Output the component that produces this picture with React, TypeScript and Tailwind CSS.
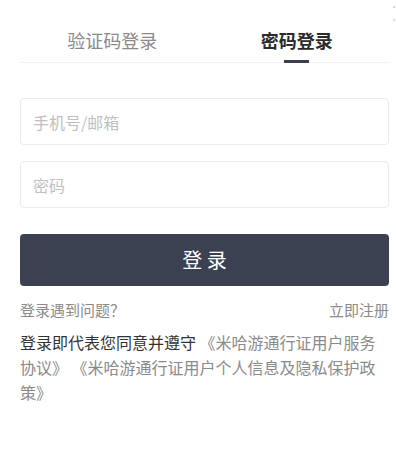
export default function App() {
  return (
    <div
      className="relative w-[396px] h-[452px] bg-white"
      style={{ fontFamily: '"Microsoft YaHei", "Noto Sans CJK SC", "Noto Sans", sans-serif' }}
    >
      <div className="absolute right-[1px] top-[6px] w-[2px] h-[2px] bg-[#d8d8d8]" />
      <div className="absolute right-[1px] top-[19px] w-[2px] h-[2px] bg-[#d8d8d8]" />
      <div className="pl-5 pr-[7px]">
        <div className="flex border-b border-[#f0f0f0] pt-[28px]">
          <div className="flex-1 flex flex-col items-center">
            <span className="text-[18px] leading-6 text-[#8a8a8a]">验证码登录</span>
            <span className="mt-[8px] h-[3px] w-[25px] -mb-px" />
          </div>
          <div className="flex-1 flex flex-col items-center">
            <span className="text-[18px] leading-6 font-bold text-[#2b2b2b]">密码登录</span>
            <span className="mt-[8px] h-[3px] w-[25px] -mb-px bg-[#3b3f4d]" />
          </div>
        </div>
        <div className="mt-[35px] flex flex-col gap-4">
          <div className="h-[47px] rounded-[4px] border border-[#ebebeb] flex items-center px-3">
            <span className="text-[16px] text-[#c0c0c0]">手机号/邮箱</span>
          </div>
          <div className="h-[47px] rounded-[4px] border border-[#ebebeb] flex items-center px-3">
            <span className="text-[16px] text-[#c0c0c0]">密码</span>
          </div>
        </div>
        <button className="mt-[26px] w-full h-[52px] rounded-[4px] bg-[#3c4152] text-white text-[20px] flex items-center justify-center">
          登 录
        </button>
        <div className="mt-[14px] flex justify-between text-[15px] leading-5 text-[#8a8a8a]">
          <span>登录遇到问题？</span>
          <span>立即注册</span>
        </div>
        <p className="mt-[10px] text-[16px] leading-[25px] text-[#333]">
          登录即代表您同意并遵守 <span className="text-[#8a8a8a]">《米哈游通行证用户服务协议》 《米哈游通行证用户个人信息及隐私保护政策》</span>
        </p>
      </div>
    </div>
  );
}
